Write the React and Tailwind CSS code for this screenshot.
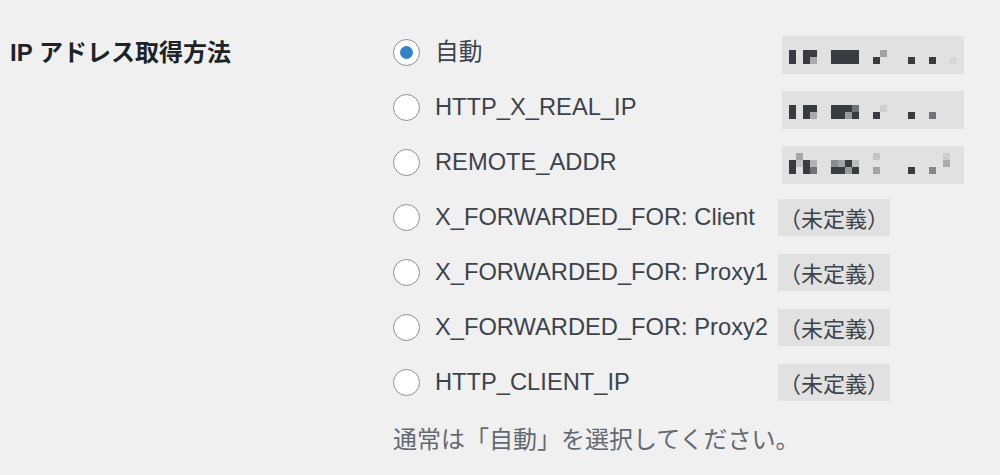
import React from "react";

const D = "#383c41";
const mosaics = [
  [
    [0, 0, D], [0, 2, D], [0, 3, D], [0, 6, D], [0, 7, D], [0, 8, D], [0, 9, D], [0, 13, "#a3a3a5"],
    [1, 0, D], [1, 2, D], [1, 3, "#a9a9ab"], [1, 6, D], [1, 7, D], [1, 8, D], [1, 9, D], [1, 12, D], [1, 17, D], [1, 20, D], [1, 23, "#d6d6d8"],
  ],
  [
    [0, 0, D], [0, 2, D], [0, 3, D], [0, 6, D], [0, 7, D], [0, 8, D], [0, 9, "#6f7276"], [0, 13, "#cfcfd1"],
    [1, 0, D], [1, 2, D], [1, 3, "#a9a9ab"], [1, 6, D], [1, 7, D], [1, 8, "#9a9a9d"], [1, 9, D], [1, 12, D], [1, 17, D], [1, 20, "#6f7276"],
  ],
  [
    [-1, 1, "#a7a7a9"], [-1, 12, "#c3c3c5"], [-1, 22, "#cdcdcf"],
    [0, 0, D], [0, 1, "#c2c2c4"], [0, 2, D], [0, 3, "#b3b3b5"], [0, 6, "#8a8b8e"], [0, 7, "#a2a3a5"], [0, 8, D], [0, 9, "#bdbdbf"], [0, 22, "#ababad"],
    [1, 0, D], [1, 2, D], [1, 3, "#6f7276"], [1, 6, D], [1, 7, D], [1, 8, "#9a9a9d"], [1, 9, D], [1, 12, "#a4a4a6"], [1, 17, D], [1, 20, "#85878a"],
  ],
];

function Mosaic({ cells }) {
  return (
    <svg width="182" height="38" viewBox="0 0 182 38" className="block">
      {cells.map(([r, c, color], i) => (
        <rect key={i} x={7 + c * 7} y={14 + r * 7} width="7" height="7" fill={color} />
      ))}
    </svg>
  );
}

function Radio({ checked }) {
  return (
    <span className="w-[27px] h-[27px] shrink-0 rounded-full border-[1.5px] border-[#8c8f94] bg-white flex items-center justify-center">
      {checked && <span className="w-[13px] h-[13px] rounded-full bg-[#3582c4]" />}
    </span>
  );
}

const rows = [
  { label: "自動", checked: true, ip: 0 },
  { label: "HTTP_X_REAL_IP", ip: 1 },
  { label: "REMOTE_ADDR", ip: 2 },
  { label: "X_FORWARDED_FOR: Client" },
  { label: "X_FORWARDED_FOR: Proxy1" },
  { label: "X_FORWARDED_FOR: Proxy2" },
  { label: "HTTP_CLIENT_IP" },
];

export default function App() {
  return (
    <div
      className="w-[1000px] h-[475px] bg-[#f0f0f1] flex overflow-hidden"
      style={{ fontFamily: '"Liberation Sans", "Noto Sans CJK JP", sans-serif' }}
    >
      <div className="w-[393px] shrink-0 pl-[10px] pt-[25px]">
        <div className="h-[55px] flex items-center text-[24px] font-semibold text-[#1d2327] whitespace-nowrap">
          IP アドレス取得方法
        </div>
      </div>
      <div className="pt-[25px]">
        {rows.map((r, i) => (
          <div key={i} className="flex items-center h-[55px]">
            <Radio checked={r.checked} />
            <span className="ml-[15px] w-[343px] shrink-0 text-[23.7px] text-[#3c434a] whitespace-nowrap">
              {r.label}
            </span>
            {r.ip !== undefined ? (
              <span className="ml-[4px] mt-[4px] w-[182px] h-[38px] bg-[#e1e1e2] block">
                <Mosaic cells={mosaics[r.ip]} />
              </span>
            ) : (
              <span
                className="w-[112px] h-[37px] bg-[#e1e1e2] flex items-center justify-center text-[22px] text-[#3c434a] whitespace-nowrap"
                style={{ fontFamily: '"Noto Sans CJK JP", sans-serif' }}
              >
                （未定義）
              </span>
            )}
          </div>
        ))}
        <p className="mt-[14px] leading-[32px] text-[24px] text-[#646970] whitespace-nowrap">
          通常は「自動」を選択してください。
        </p>
      </div>
    </div>
  );
}
